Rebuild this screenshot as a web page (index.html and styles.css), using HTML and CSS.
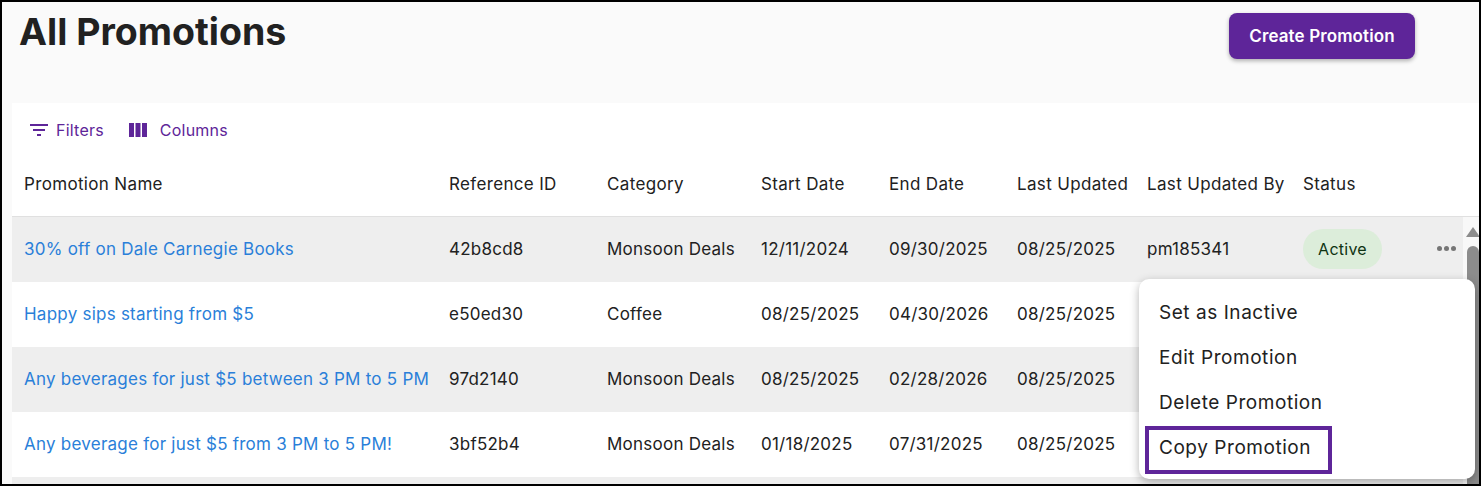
FILE: index.html
```html
<!DOCTYPE html>
<html lang="en">
<head>
  <meta charset="UTF-8" />
  <title>All Promotions</title>
  <link rel="stylesheet" href="styles.css">
</head>
<body>
  <div class="frame">
    <header class="page-head">
      <h1>All Promotions</h1>
      <button class="btn-primary">Create Promotion</button>
    </header>

    <section class="panel">
      <div class="toolbar">
        <button class="tool tool-filters">
          <svg width="18" height="12" viewBox="0 0 18 12"><path d="M0 0h18v2H0zM3 5h12v2H3zM7 10h4v2H7z" fill="#5e2599"/></svg>
          Filters
        </button>
        <button class="tool tool-columns">
          <svg width="18" height="14" viewBox="0 0 18 14"><path d="M0 0h5v14H0zM6.500 0h5v14h-5zM13 0h5v14h-5z" fill="#5e2599"/></svg>
          Columns
        </button>
      </div>

      <div class="row head-row">
        <div>Promotion Name</div>
        <div>Reference ID</div>
        <div>Category</div>
        <div>Start Date</div>
        <div>End Date</div>
        <div>Last Updated</div>
        <div>Last Updated By</div>
        <div>Status</div>
      </div>

      <div class="body-rows">
        <div class="row shaded">
          <a href="#">30% off on Dale Carnegie Books</a>
          <div>42b8cd8</div>
          <div>Monsoon Deals</div>
          <div>12/11/2024</div>
          <div>09/30/2025</div>
          <div>08/25/2025</div>
          <div>pm185341</div>
          <div class="status-cell">
            <span class="chip">Active</span>
            <span class="dots"><i></i><i></i><i></i></span>
          </div>
        </div>
        <div class="row">
          <a href="#">Happy sips starting from $5</a>
          <div>e50ed30</div>
          <div>Coffee</div>
          <div>08/25/2025</div>
          <div>04/30/2026</div>
          <div>08/25/2025</div>
        </div>
        <div class="row shaded">
          <a href="#">Any beverages for just $5 between 3 PM to 5 PM</a>
          <div>97d2140</div>
          <div>Monsoon Deals</div>
          <div>08/25/2025</div>
          <div>02/28/2026</div>
          <div>08/25/2025</div>
        </div>
        <div class="row">
          <a href="#">Any beverage for just $5 from 3 PM to 5 PM!</a>
          <div>3bf52b4</div>
          <div>Monsoon Deals</div>
          <div>01/18/2025</div>
          <div>07/31/2025</div>
          <div>08/25/2025</div>
        </div>
        <div class="row shaded"></div>

        <div class="scrollbar">
          <span class="arrow"></span>
          <span class="thumb"></span>
        </div>
      </div>

      <ul class="menu">
        <li>Set as Inactive</li>
        <li>Edit Promotion</li>
        <li>Delete Promotion</li>
        <li>Copy Promotion<span class="callout"></span></li>
      </ul>
    </section>
  </div>
</body>
</html>
```

FILE: styles.css
```css
* {
  box-sizing: border-box;
}

body {
  margin: 0;
  font-family: Inter, "Liberation Sans", sans-serif;
  color: #212121;
}

.frame {
  height: 486px;
  overflow: hidden;
  border: 2px solid #000;
  background-color: #fafafa;
}

.page-head {
  height: 101px;
  display: flex;
  justify-content: space-between;
  align-items: flex-start;
  padding: 11px 64px 0 17px;
}

h1 {
  margin: 0;
  font-size: 37.5px;
  line-height: 38px;
  font-weight: 700;
}

.btn-primary {
  width: 186px;
  height: 46px;
  border: none;
  border-radius: 8px;
  background-color: #5e2599;
  color: #fff;
  font-family: inherit;
  font-size: 17px;
  font-weight: 600;
  letter-spacing: 0.12px;
  box-shadow: 0 2px 4px rgba(0, 0, 0, 0.3);
}

.panel {
  position: relative;
  margin-left: 10px;
  height: 383px;
  background-color: #fff;
}

.toolbar {
  height: 55px;
  display: flex;
  align-items: center;
  padding: 0 0 2px 18px;
}

.tool {
  display: flex;
  align-items: center;
  padding: 0;
  border: none;
  background: none;
  color: #5e2599;
  font-family: inherit;
  font-size: 16px;
  letter-spacing: 0.22px;
}

.tool-filters {
  gap: 8px;
  margin-right: 25px;
}

.tool-columns {
  gap: 13px;
}

.row {
  height: 65px;
  display: grid;
  grid-template-columns: 425px 158px 154px 128px 128px 130px 156px 1fr;
  align-items: center;
  font-size: 17px;
  letter-spacing: 0.24px;
  padding-bottom: 2px;
}

.row > * {
  padding-left: 12px;
}

.head-row {
  height: 59px;
  border-bottom: 1px solid #e0e0e0;
  padding-bottom: 6px;
  letter-spacing: 0.34px;
}

.body-rows {
  position: relative;
}

.shaded {
  background-color: #eeeeee;
}

.row a {
  color: #2a7fd9;
  text-decoration: none;
}

.status-cell {
  display: flex;
  align-items: center;
}

.chip {
  width: 79px;
  height: 40px;
  display: flex;
  align-items: center;
  justify-content: center;
  border-radius: 20px;
  background-color: #dcedda;
  color: #0f3312;
  font-size: 16px;
  letter-spacing: 0.25px;
}

.dots {
  display: flex;
  gap: 2px;
  margin-left: 55px;
}

.dots i {
  width: 5px;
  height: 5px;
  border-radius: 50%;
  background-color: #757575;
}

.scrollbar {
  position: absolute;
  top: 0;
  right: 0;
  bottom: 0;
  width: 16px;
  display: flex;
  flex-direction: column;
  align-items: center;
  padding-left: 3px;
  background-color: #f8f8f8;
}

.arrow {
  margin-top: 10px;
  border-left: 7px solid transparent;
  border-right: 7px solid transparent;
  border-bottom: 10px solid #8c8c8c;
}

.thumb {
  width: 12px;
  height: 260px;
  flex-shrink: 0;
  margin-top: 9px;
  border-radius: 6px 6px 0 0;
  background-color: #8c8c8c;
}

.menu {
  position: absolute;
  top: 176px;
  left: 1127px;
  width: 336px;
  height: 200px;
  margin: 0;
  padding: 11px 0 0;
  list-style: none;
  border-radius: 10px;
  background-color: #fff;
  box-shadow: 0 3px 10px rgba(0, 0, 0, 0.3);
}

.menu li {
  position: relative;
  height: 45px;
  display: flex;
  align-items: center;
  padding-left: 20px;
  font-size: 19px;
  letter-spacing: 0.55px;
}

.callout {
  position: absolute;
  top: 1px;
  left: 6px;
  width: 187px;
  height: 48px;
  border: 4px solid #5e2599;
}
```
